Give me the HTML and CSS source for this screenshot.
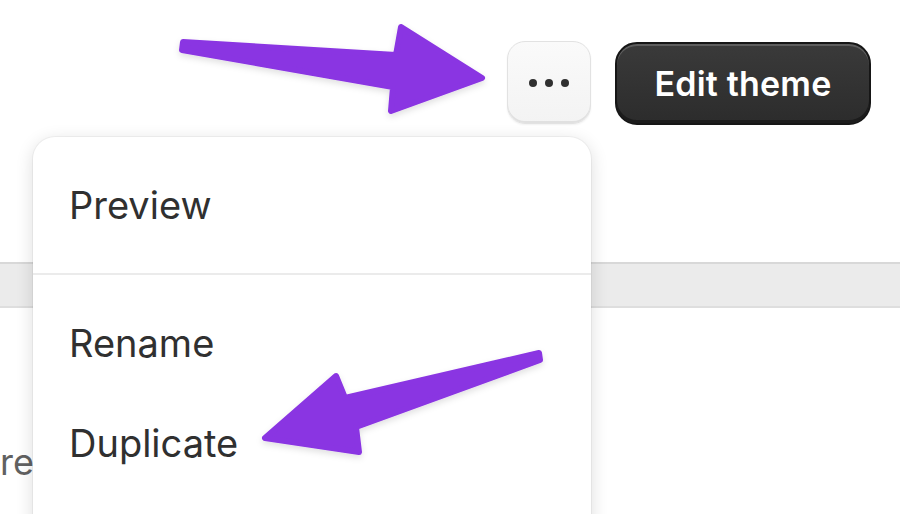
FILE: index.html
```html
<!DOCTYPE html>
<html lang="en">

<head>
  <meta charset="UTF-8">
  <meta name="viewport" content="width=device-width, initial-scale=1.0">
  <title>Theme actions</title>
  <link rel="stylesheet" href="styles.css">
</head>

<body>
  <div class="page">
    <div class="top-bar">
      <button class="more-button" aria-label="More actions">
        <svg viewBox="0 0 40 10" xmlns="http://www.w3.org/2000/svg">
          <circle cx="4" cy="5" r="4" />
          <circle cx="20" cy="5" r="4" />
          <circle cx="36" cy="5" r="4" />
        </svg>
      </button>
      <button class="edit-button">Edit theme</button>
    </div>

    <div class="table-head"></div>

    <div class="table-row">
      <span class="cell-text">re</span>
    </div>

    <div class="menu">
      <div class="menu-section">
        <div class="menu-item">Preview</div>
      </div>
      <div class="menu-section">
        <div class="menu-item">Rename</div>
        <div class="menu-item">Duplicate</div>
      </div>
    </div>

    <svg class="arrows" viewBox="0 0 900 514" xmlns="http://www.w3.org/2000/svg">
      <defs>
        <filter id="arrow-shadow" x="-10%" y="-20%" width="120%" height="150%">
          <feDropShadow dx="0" dy="3" stdDeviation="3" flood-color="#000" flood-opacity="0.12" />
        </filter>
      </defs>
      <g fill="#8a36e2" stroke="#8a36e2" stroke-width="6" stroke-linejoin="round" filter="url(#arrow-shadow)">
        <polygon points="183,42 396,55 401,27 482,78 391,111 393,87 182,50" />
        <polygon points="539,353 345,398 336,376 265,438 359,452 356,427 540,360" />
      </g>
    </svg>
  </div>
</body>

</html>
```

FILE: styles.css
```css
body {
  margin: 0;
  background: #ffffff;
  font-family: Inter, "Noto Sans", sans-serif;
  overflow: hidden;
}

.page {
  position: relative;
  width: 900px;
  height: 514px;
  overflow: hidden;
}

.top-bar {
  display: flex;
  justify-content: flex-end;
  align-items: center;
  gap: 24px;
  padding: 40px 29px 0 0;
  height: 85px;
}

.more-button {
  width: 84px;
  height: 83px;
  border-radius: 18px;
  border: 1px solid #e2e2e2;
  background: linear-gradient(#fafafa, #f3f3f3);
  box-shadow: inset 0 -2px 0 #e0e0e0, 0 1px 2px rgba(0, 0, 0, 0.06);
  display: flex;
  align-items: center;
  justify-content: center;
  padding: 0;
}

.more-button svg {
  width: 40px;
  height: 10px;
  fill: #303030;
}

.edit-button {
  width: 256px;
  height: 83px;
  margin-top: 2px;
  border-radius: 22px;
  border: 2px solid #161616;
  background: linear-gradient(#3a3a3a, #2c2c2c);
  box-shadow: inset 0 2px 0 rgba(255, 255, 255, 0.18), inset 0 -3px 0 #1c1c1c;
  color: #ffffff;
  font-family: Inter, "Noto Sans", sans-serif;
  font-size: 34px;
  font-weight: 600;
  letter-spacing: 0.2px;
}

.table-head {
  margin-top: 137px;
  height: 42px;
  background: #ebebeb;
  border-top: 2px solid #d8d8d8;
  border-bottom: 2px solid #dedede;
}

.table-row {
  padding-top: 132px;
}

.cell-text {
  display: block;
  font-size: 36px;
  line-height: 44px;
  color: #616161;
}

.menu {
  position: absolute;
  left: 33px;
  top: 137px;
  width: 558px;
  height: 480px;
  background: #ffffff;
  border-radius: 22px;
  box-shadow: 0 0 0 1px rgba(0, 0, 0, 0.04), 0 4px 18px rgba(0, 0, 0, 0.14);
}

.menu-section {
  padding: 18px 0;
}

.menu-section + .menu-section {
  border-top: 2px solid #ebebeb;
}

.menu-item {
  height: 100px;
  line-height: 100px;
  padding: 0 36px;
  font-size: 38px;
  color: #303030;
}

.arrows {
  position: absolute;
  left: 0;
  top: 0;
  width: 900px;
  height: 514px;
  pointer-events: none;
}
```
